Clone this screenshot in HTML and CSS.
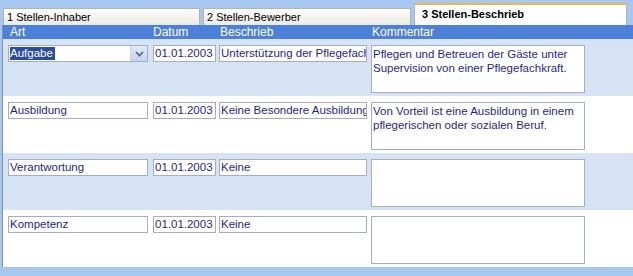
FILE: index.html
```html
<!DOCTYPE html>
<html lang="de">
<head>
    <meta charset="UTF-8">
    <meta name="viewport" content="width=device-width, initial-scale=1.0">
    <title>Stellen-Beschrieb</title>

    <link rel="stylesheet" href="styles.css">
</head>
<body>
    <nav class="tabs">
        <div class="tab">1 Stellen-Inhaber</div>
        <div class="tab wide">2 Stellen-Bewerber</div>
        <div class="tab active">3 Stellen-Beschrieb</div>
    </nav>

    <main class="panel">
        <div class="row head">
            <span class="col-art">Art</span>
            <span class="col-date">Datum</span>
            <span class="col-desc">Beschrieb</span>
            <span class="col-note">Kommentar</span>
        </div>

        <div class="row alt">
            <div class="field col-art combo">
                <span class="selected">Aufgabe</span>
                <span class="drop">
                    <svg width="9" height="6" viewBox="0 0 9 6"><path d="M1 1 L4.5 4.5 L8 1" fill="none" stroke="#4d6185" stroke-width="1.6"/></svg>
                </span>
            </div>
            <div class="field col-date">01.01.2003</div>
            <div class="field col-desc">Unterstützung der Pflegefachkraft</div>
            <div class="field col-note memo">Pflegen und Betreuen der Gäste unter Supervision von einer Pflegefachkraft.</div>
        </div>

        <div class="row">
            <div class="field col-art">Ausbildung</div>
            <div class="field col-date">01.01.2003</div>
            <div class="field col-desc">Keine Besondere Ausbildung</div>
            <div class="field col-note memo">Von Vorteil ist eine Ausbildung in einem pflegerischen oder sozialen Beruf.</div>
        </div>

        <div class="row alt">
            <div class="field col-art">Verantwortung</div>
            <div class="field col-date">01.01.2003</div>
            <div class="field col-desc">Keine</div>
            <div class="field col-note memo"></div>
        </div>

        <div class="row">
            <div class="field col-art">Kompetenz</div>
            <div class="field col-date">01.01.2003</div>
            <div class="field col-desc">Keine</div>
            <div class="field col-note memo"></div>
        </div>
    </main>
</body>
</html>
```

FILE: styles.css
```css
body {
    margin: 0;
    background-color: #a6c8f0;
    font-family: "Liberation Sans", Arial, sans-serif;
    overflow: hidden;
}

.tabs {
    display: flex;
    align-items: flex-end;
    gap: 3px;
    height: 25px;
    padding-left: 3px;
    box-sizing: border-box;
}

.tab {
    width: 197px;
    height: 17px;
    box-sizing: border-box;
    padding: 2px 0 0 3px;
    border: 1px solid #b4b4ac;
    border-bottom: none;
    background: linear-gradient(#fdfdfb, #ebeae2);
    font-size: 11px;
    color: #000;
}

.tab.wide {
    width: 208px;
}

.tab.active {
    width: 213px;
    height: 22px;
    padding: 3px 0 0 7px;
    border-top: 2px solid #f0b445;
    background: #fff;
    font-weight: bold;
}

.panel {
    margin-left: 2px;
    border-left: 1px solid #8591a6;
    background-color: #fff;
}

.row {
    display: flex;
    align-items: flex-start;
    height: 57px;
    box-sizing: border-box;
    padding: 6px 0 0 5px;
    background-color: #fff;
}

.row.alt {
    background-color: #d5e3f5;
}

.row.head {
    height: 14px;
    padding: 0 0 0 7px;
    background-color: #4d80d8;
    color: #fff;
    font-size: 12px;
    line-height: 14px;
}

.head .col-art { width: 143px; }
.head .col-date { width: 67px; }
.head .col-desc { width: 152px; }

.field {
    height: 17px;
    box-sizing: border-box;
    margin-right: 4px;
    padding: 0 1px;
    border: 1px solid #a6aebb;
    background-color: #fff;
    color: #1f1f8a;
    font-size: 11.5px;
    line-height: 15px;
    white-space: nowrap;
    overflow: hidden;
}

.col-art { width: 140px; }
.field.col-art { margin-right: 5px; }
.col-date { width: 63px; }
.field.col-date { margin-right: 3px; }
.col-desc { width: 148px; }

.memo {
    width: 214px;
    height: 48px;
    white-space: normal;
    line-height: 14px;
    padding-top: 1px;
}

.combo {
    display: flex;
    align-items: center;
    padding: 0 0 0 1px;
}

.combo .selected {
    padding-right: 2px;
    margin-right: auto;
    background-color: #2a4c9c;
    color: #fff;
    line-height: 13px;
}

.drop {
    display: flex;
    align-items: center;
    justify-content: center;
    width: 16px;
    height: 15px;
    background: linear-gradient(#e4ebf8, #c4d2ec);
    border-left: 1px solid #c8d2e4;
}
```
